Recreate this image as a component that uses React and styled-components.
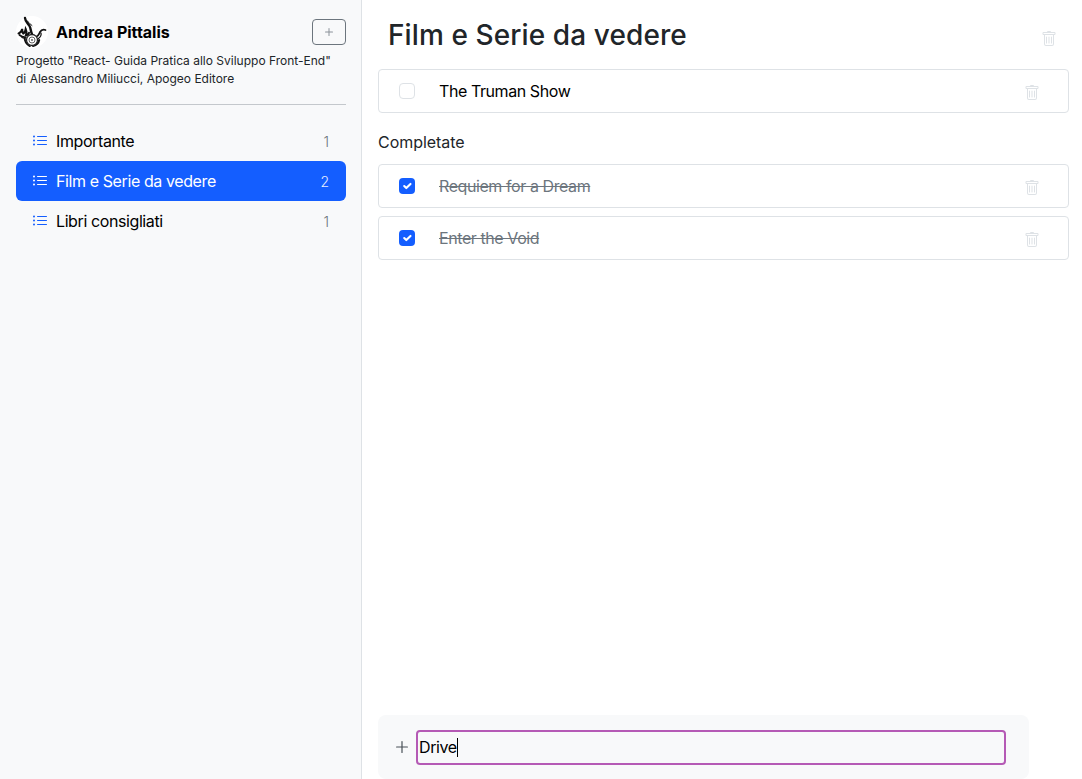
import React from "react";
import styled, { createGlobalStyle } from "styled-components";

const Global = createGlobalStyle`
  html, body { margin: 0; padding: 0; height: 100%; background: #fff; }
  body { font-family: Inter, "Liberation Sans", sans-serif; color: #000; }
  * { box-sizing: border-box; }
`;
const Page = styled.div`display: flex; height: 100vh; overflow: hidden;`;
const Sidebar = styled.aside`
  width: 362px; flex: none; background: #f8f9fa; border-right: 1px solid #dee2e6;
  padding: 16px 15px 0 16px;
`;
const Profile = styled.div`display: flex; align-items: center; height: 32px; gap: 8px;`;
const Name = styled.div`font-size: 16px; font-weight: 700; line-height: 34px; flex: 1; letter-spacing: 0;`;
const AddButton = styled.button`
  width: 34px; height: 26px; padding: 0; border: 1px solid #6c757d; border-radius: 4px;
  background: transparent; color: #8a9299; display: flex; align-items: center; justify-content: center;
`;
const Blurb = styled.p`margin: 4px 0 0; font-size: 12px; line-height: 18px; color: #212529;`;
const Divider = styled.hr`margin: 16px 0; border: 0; border-top: 1px solid #c4c8cc;`;
const ListNav = styled.nav`display: flex; flex-direction: column;`;
const ListItem = styled.div`
  display: flex; align-items: center; height: 40px; padding: 0 17px 0 16px; border-radius: 6px;
  font-size: 16px; line-height: 24px; letter-spacing: -0.4px;
  background: ${p => (p.$active ? "#145eff" : "transparent")};
  color: ${p => (p.$active ? "#fff" : "#000")};
`;
const ListIcon = styled.span`
  display: flex; width: 24px; flex: none; margin-top: -1px;
  color: ${p => (p.$active ? "#fff" : "#145eff")};
`;
const ListName = styled.span`flex: 1;`;
const Count = styled.span`
  font-size: 14px; font-weight: 300; letter-spacing: 0; margin-top: 1px;
  color: ${p => (p.$active ? "#e6edff" : "#6c757d")};
`;
const Main = styled.main`flex: 1; min-width: 0; display: flex; flex-direction: column; padding: 0 13px 0 16px;`;
const TitleBar = styled.header`display: flex; align-items: center; height: 69px; padding: 1px 12px 0 10px;`;
const Title = styled.h1`flex: 1; margin: 0; font-size: 28px; line-height: 34px; font-weight: 500; letter-spacing: 0.1px; color: #212529;`;
const TitleTrash = styled.span`display: flex; margin-top: 8px; color: #dee2e6;`;
const Tasks = styled.div`flex: 1; display: flex; flex-direction: column; gap: 8px;`;
const Row = styled.div`
  display: flex; align-items: center; height: 44px; padding: 0 36px 0 20px;
  border: 1px solid #dee2e6; border-radius: 4px; background: #fff;
`;
const Check = styled.span`
  width: 16px; height: 16px; flex: none; border-radius: 4px; display: flex; align-items: center; justify-content: center;
  border: ${p => (p.$on ? "0" : "1px solid #dee2e6")};
  background: ${p => (p.$on ? "#145eff" : "#fff")};
`;
const TaskText = styled.span`
  flex: 1; margin-left: 24px; font-size: 16px; line-height: 24px; letter-spacing: -0.42px;
  color: ${p => (p.$done ? "#6c757d" : "#000")};
  text-decoration: ${p => (p.$done ? "line-through" : "none")};
`;
const RowTrash = styled.span`display: flex; margin: 3px -8px 0 0; color: #dee2e6;`;
const SectionTitle = styled.h2`margin: 9px 0 2px; font-size: 16px; line-height: 24px; font-weight: 400; letter-spacing: -0.05px; color: #212529;`;
const Composer = styled.form`
  display: flex; align-items: center; height: 64px; margin-right: 40px; padding: 0 23px 0 16px;
  background: #f8f9fa; border-radius: 8px; flex: none;
`;
const PlusIcon = styled.span`display: flex; width: 22px; flex: none; color: #495057;`;
const Field = styled.div`
  flex: 1; height: 35px; border: 2px solid #b55ab5; border-radius: 4px; padding: 0 1px;
  display: flex; align-items: center; font-size: 16px; line-height: 24px; letter-spacing: -0.4px; color: #000;
`;
const Caret = styled.span`display: inline-block; width: 1px; height: 19px; background: #000;`;

const Trash = ({ size = 16 }) => (
  <svg width={size} height={size} viewBox="0 0 16 16" fill="currentColor">
    <path d="M5.5 5.5A.5.5 0 0 1 6 6v6a.5.5 0 0 1-1 0V6a.5.5 0 0 1 .5-.5zm2.5 0a.5.5 0 0 1 .5.5v6a.5.5 0 0 1-1 0V6a.5.5 0 0 1 .5-.5zm3 .5a.5.5 0 0 0-1 0v6a.5.5 0 0 0 1 0V6z" />
    <path fillRule="evenodd" d="M14.5 3a1 1 0 0 1-1 1H13v9a2 2 0 0 1-2 2H5a2 2 0 0 1-2-2V4h-.5a1 1 0 0 1-1-1V2a1 1 0 0 1 1-1H6a1 1 0 0 1 1-1h2a1 1 0 0 1 1 1h3.5a1 1 0 0 1 1 1v1zM4.118 4 4 4.059V13a1 1 0 0 0 1 1h6a1 1 0 0 0 1-1V4.059L11.882 4H4.118zM2.5 3V2h11v1h-11z" />
  </svg>
);
const ListGlyph = () => (
  <svg width="16" height="16" viewBox="0 0 16 16" fill="currentColor">
    <path fillRule="evenodd" d="M5 11.5a.5.5 0 0 1 .5-.5h9a.5.5 0 0 1 0 1h-9a.5.5 0 0 1-.5-.5zm0-4a.5.5 0 0 1 .5-.5h9a.5.5 0 0 1 0 1h-9a.5.5 0 0 1-.5-.5zm0-4a.5.5 0 0 1 .5-.5h9a.5.5 0 0 1 0 1h-9a.5.5 0 0 1-.5-.5zm-3 1a1 1 0 1 0 0-2 1 1 0 0 0 0 2zm0 4a1 1 0 1 0 0-2 1 1 0 0 0 0 2zm0 4a1 1 0 1 0 0-2 1 1 0 0 0 0 2z" />
  </svg>
);
const Plus = ({ size }) => (
  <svg width={size} height={size} viewBox="0 0 16 16" fill="currentColor">
    <path d="M8 4a.5.5 0 0 1 .5.5v3h3a.5.5 0 0 1 0 1h-3v3a.5.5 0 0 1-1 0v-3h-3a.5.5 0 0 1 0-1h3v-3A.5.5 0 0 1 8 4z" />
  </svg>
);
const PlusLarge = () => (
  <svg width="16" height="16" viewBox="0 0 16 16" fill="currentColor">
    <path d="M8 2a.6.6 0 0 1 .6.6v4.8h4.8a.6.6 0 0 1 0 1.2H8.6v4.8a.6.6 0 0 1-1.2 0V8.600H2.600a.6.6 0 0 1 0-1.2h4.800V2.600A.6.6 0 0 1 8 2z" />
  </svg>
);
const Tick = () => (
  <svg width="14" height="14" viewBox="0 0 20 20" fill="none">
    <path d="M6 10l3 3 6-6" stroke="#fff" strokeWidth="3" strokeLinecap="round" strokeLinejoin="round" />
  </svg>
);
const Logo = () => (
  <svg width="32" height="32" viewBox="0 0 32 32" style={{ flex: "none" }}>
    <circle cx="16" cy="16" r="16" fill="#fff" />
    <g fill="none" stroke="#111" strokeLinecap="round">
      <path d="M9 2c.2 3.500 3 5.500 4.500 8 1.500 2.500 1 5 2.500 8" strokeWidth="2.400" />
      <path d="M11.500 5c1 2 3 3 4.500 4.500" strokeWidth="1" />
      <path d="M2.500 17.500c2-.5 3-2.200 3.700-4.500.4 2-.2 3.500 1 4.500 1.500-.7 2.200-2.500 2.500-4.500 1 2 1 4.300.3 6 1.500 0 2.500-.8 3-2.200" strokeWidth="2" />
      <path d="M3.500 19c1.800 1.500 4 2.500 6.500 2" strokeWidth="1.700" />
      <path d="M6 21.500c1 .5 2 .7 3 .5" strokeWidth="1.200" />
      <path d="M29.500 14c-2.500-.8-4.500.3-5.500 2-1 2-1.500 4-4 5" strokeWidth="1.800" />
      <path d="M25 17c.5 2-.5 4-2.500 5.500" strokeWidth="1.200" />
      <path d="M8.800 22c-.5 3 1.800 6.500 5 8" strokeWidth="2" />
      <path d="M23.200 24c-.5 2.800-2.800 5-6.200 6" strokeWidth="2" />
    </g>
    <circle cx="16" cy="24" r="5.500" fill="#fff" stroke="#222" strokeWidth="1.300" />
    <circle cx="16" cy="24" r="3" fill="none" stroke="#666" strokeWidth="1" />
    <circle cx="16" cy="24" r="1" fill="#666" />
  </svg>
);

const lists = [
  { name: "Importante", count: 1 },
  { name: "Film e Serie da vedere", count: 2, active: true },
  { name: "Libri consigliati", count: 1 },
];
const done = ["Requiem for a Dream", "Enter the Void"];

export default function App() {
  return (
    <Page>
      <Global />
      <Sidebar>
        <Profile>
          <Logo />
          <Name>Andrea Pittalis</Name>
          <AddButton type="button"><Plus size={16} /></AddButton>
        </Profile>
        <Blurb>
          Progetto "React- Guida Pratica allo Sviluppo Front-End"
          <br />
          di Alessandro Miliucci, Apogeo Editore
        </Blurb>
        <Divider />
        <ListNav>
          {lists.map(l => (
            <ListItem key={l.name} $active={l.active}>
              <ListIcon $active={l.active}><ListGlyph /></ListIcon>
              <ListName>{l.name}</ListName>
              <Count $active={l.active}>{l.count}</Count>
            </ListItem>
          ))}
        </ListNav>
      </Sidebar>
      <Main>
        <TitleBar>
          <Title>Film e Serie da vedere</Title>
          <TitleTrash><Trash /></TitleTrash>
        </TitleBar>
        <Tasks>
          <Row>
            <Check />
            <TaskText>The Truman Show</TaskText>
            <RowTrash><Trash /></RowTrash>
          </Row>
          <SectionTitle>Completate</SectionTitle>
          {done.map(t => (
            <Row key={t}>
              <Check $on><Tick /></Check>
              <TaskText $done>{t}</TaskText>
              <RowTrash><Trash /></RowTrash>
            </Row>
          ))}
        </Tasks>
        <Composer>
          <PlusIcon><PlusLarge /></PlusIcon>
          <Field>Drive<Caret /></Field>
        </Composer>
      </Main>
    </Page>
  );
}
